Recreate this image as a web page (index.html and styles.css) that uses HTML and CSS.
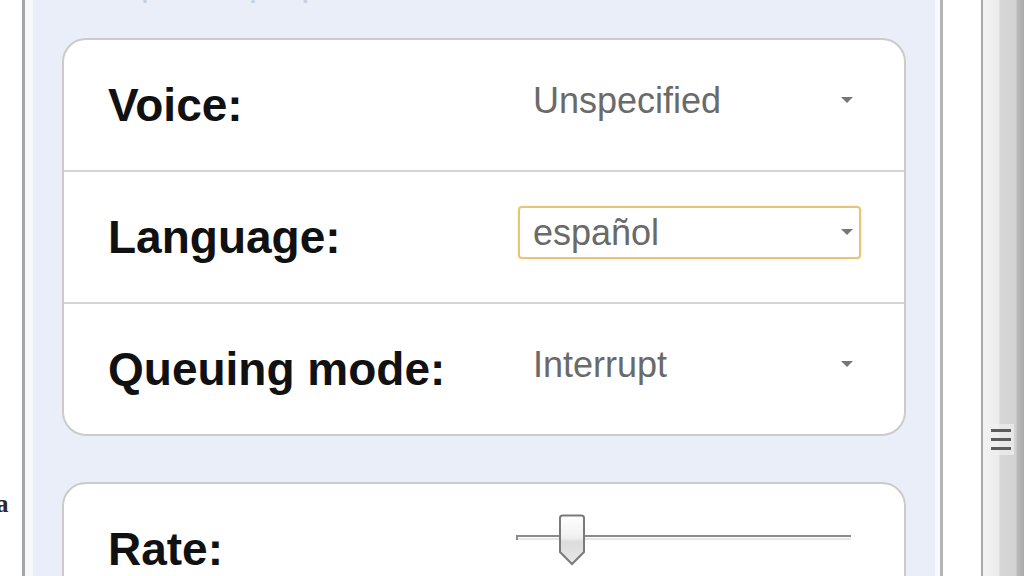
FILE: index.html
```html
<!DOCTYPE html>
<html>
<head>
<meta charset="utf-8">
<link rel="stylesheet" href="styles.css">
</head>
<body>
<div class="page">
  <div class="left-col"><span class="cut-text">a</span></div>
  <div class="rule rule-left"></div>
  <div class="spacer-left"></div>
  <main class="panel">
    <h2 class="panel-title">Speech properties</h2>
    <section class="card">
      <div class="row">
        <div class="label">Voice:</div>
        <div class="select"><span class="value">Unspecified</span><span class="arrow"></span></div>
      </div>
      <div class="row">
        <div class="label">Language:</div>
        <div class="select focused"><span class="value">español</span><span class="arrow"></span></div>
      </div>
      <div class="row">
        <div class="label">Queuing mode:</div>
        <div class="select"><span class="value">Interrupt</span><span class="arrow"></span></div>
      </div>
    </section>
    <section class="card card-second">
      <div class="row">
        <div class="label">Rate:</div>
        <div class="slider">
          <div class="track"></div>
          <svg class="thumb" width="28" height="52" viewBox="0 0 28 52">
            <defs>
              <linearGradient id="tg" x1="0" y1="0" x2="0" y2="1">
                <stop offset="0" stop-color="#ffffff"/>
                <stop offset="0.45" stop-color="#f0f0f0"/>
                <stop offset="0.55" stop-color="#dcdcdc"/>
                <stop offset="1" stop-color="#e8e8e8"/>
              </linearGradient>
            </defs>
            <path d="M2 4 Q2 1.5 4.5 1.5 H23.5 Q26 1.5 26 4 V38 L14 50 L2 38 Z" fill="url(#tg)" stroke="#7a7a7a" stroke-width="2"/>
          </svg>
        </div>
      </div>
    </section>
  </main>
  <div class="spacer-right"></div>
  <div class="rule rule-right"></div>
  <div class="gutter"></div>
  <div class="rule rule-thin"></div>
  <div class="scrollbar"><div class="grip"><span></span><span></span><span></span></div></div>
</div>
</body>
</html>
```

FILE: styles.css
```css
html, body {
  margin: 0;
  padding: 0;
  background: #ffffff;
  overflow: hidden;
}

.page {
  display: flex;
  width: 1024px;
  height: 576px;
  overflow: hidden;
}

.left-col {
  width: 22px;
  flex: none;
  padding-top: 489px;
  box-sizing: border-box;
  overflow: hidden;
}

.cut-text {
  display: block;
  font-family: "Liberation Serif", serif;
  font-size: 25px;
  font-weight: bold;
  line-height: 30px;
  color: #2a2a2a;
  margin-left: -4px;
}

.rule {
  flex: none;
}

.rule-left {
  width: 3px;
  background: #a6a6a6;
}

.spacer-left {
  width: 8px;
  flex: none;
  background: #f6f8fc;
}

.panel {
  width: 902px;
  flex: none;
  box-sizing: border-box;
  background: #e9eef9;
  padding: 0 29px 0 29px;
  overflow: hidden;
}

.panel-title {
  margin: -37px 0 35px 55px;
  height: 40px;
  font-family: "Liberation Sans", Arial, sans-serif;
  font-size: 36px;
  line-height: 40px;
  font-weight: normal;
  color: #c6d0e2;
  white-space: nowrap;
}

.card {
  background: #ffffff;
  border: 2px solid #cbcbcb;
  border-radius: 24px;
  overflow: hidden;
}

.card-second {
  margin-top: 46px;
}

.row {
  display: flex;
  align-items: center;
  height: 130px;
  padding-left: 44px;
  border-top: 2px solid #d3d3d3;
}

.row:first-child {
  border-top: none;
}

.label {
  width: 410px;
  flex: none;
  font-family: "Liberation Sans", Arial, sans-serif;
  font-weight: bold;
  font-size: 46px;
  color: #111111;
  white-space: nowrap;
}

.select {
  display: flex;
  align-items: center;
  justify-content: space-between;
  width: 343px;
  height: 53px;
  box-sizing: border-box;
  border: 2px solid transparent;
  border-radius: 4px;
  padding: 0 6px 0 13px;
  margin-bottom: 10px;
}

.select.focused {
  border-color: #e6c577;
  box-shadow: 0 0 2px #f0dca8;
}

.value {
  font-family: "Liberation Sans", Arial, sans-serif;
  font-size: 36px;
  color: #6a6a6a;
  line-height: 49px;
}

.arrow {
  width: 0;
  height: 0;
  border-left: 6px solid transparent;
  border-right: 6px solid transparent;
  border-top: 6px solid #777777;
}

.slider {
  position: relative;
  width: 335px;
  height: 52px;
  margin-left: -2px;
  margin-bottom: 18px;
}

.track {
  position: absolute;
  left: 0;
  right: 0;
  top: 21px;
  height: 2px;
  background: #8c8c8c;
  box-shadow: 0 3px 0 #e6e6e6;
}

.track::before {
  content: "";
  position: absolute;
  left: 0;
  top: 0;
  width: 2px;
  height: 5px;
  background: #8c8c8c;
}

.thumb {
  position: absolute;
  left: 42px;
  top: 0;
}

.spacer-right {
  width: 5px;
  flex: none;
  background: #f7f9fd;
}

.rule-right {
  width: 3px;
  background: #b3b3b3;
}

.gutter {
  width: 38px;
  flex: none;
  background: #ffffff;
}

.rule-thin {
  width: 2px;
  background: #a9a9a9;
}

.scrollbar {
  flex: 1;
  display: flex;
  flex-direction: column;
  align-items: center;
  padding-top: 424px;
  box-sizing: border-box;
  background: linear-gradient(to right, #f3f3f3 0%, #ececec 38%, #d8d8d8 42%, #d2d2d2 80%, #b9b9b9 84%, #a9a9a9 100%);
}

.grip {
  display: flex;
  flex-direction: column;
  gap: 6px;
  padding: 5px 3px;
  background: rgba(240, 240, 240, 0.7);
  margin-right: 6px;
}

.grip span {
  display: block;
  width: 20px;
  height: 3px;
  background: #5c5c5c;
}
```
